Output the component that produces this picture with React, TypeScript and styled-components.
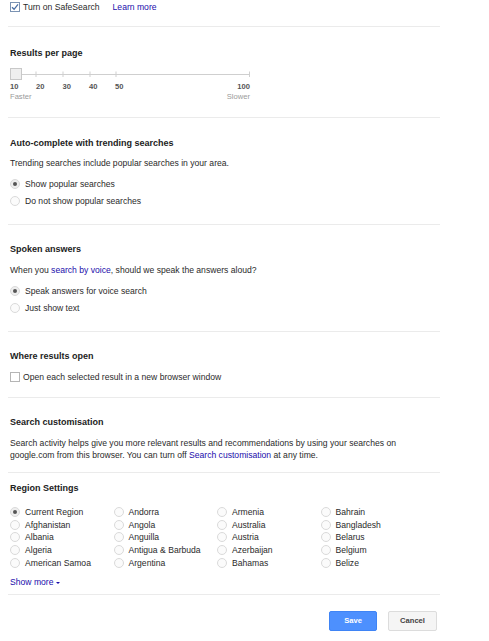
import React from "react";
import styled, { createGlobalStyle } from "styled-components";

const GlobalStyle = createGlobalStyle`
  html, body {
    margin: 0;
    padding: 0;
    background: #fff;
  }
  body {
    font-family: "Liberation Sans", Arial, sans-serif;
    font-size: 8.6px;
    color: #2a2a2a;
  }
`;

const Page = styled.div`
  width: 432px;
  margin-left: 8px;
`;

const Section = styled.div<{ $pt: number; $pb: number; $last?: boolean }>`
  padding: ${(p) => p.$pt}px 0 ${(p) => p.$pb}px 2px;
  border-bottom: ${(p) => (p.$last ? "none" : "1px solid #ebebeb")};
`;

const Heading = styled.div<{ $mb: number }>`
  font-size: 9px;
  font-weight: bold;
  line-height: 12px;
  color: #222;
  margin-bottom: ${(p) => p.$mb}px;
`;

const Text = styled.div<{ $mb?: number }>`
  line-height: 12px;
  margin-bottom: ${(p) => p.$mb ?? 0}px;
`;

const Link = styled.a`
  color: #1a0dab;
  text-decoration: none;
  cursor: pointer;
`;

const Row = styled.label<{ $gap?: number }>`
  display: flex;
  align-items: center;
  height: 12px;
  line-height: 12px;
  white-space: nowrap;
  & + & {
    margin-top: ${(p) => p.$gap ?? 5}px;
  }
`;

const Box = styled.span<{ $checked?: boolean }>`
  box-sizing: border-box;
  width: 10px;
  height: 10px;
  margin: 0 3px 0 0;
  border: 1px solid ${(p) => (p.$checked ? "#7b93b3" : "#b5b5b5")};
  background: #fff;
  display: inline-flex;
  align-items: center;
  justify-content: center;
  flex-shrink: 0;
`;

const Radio = styled.span<{ $checked?: boolean }>`
  box-sizing: border-box;
  width: 10px;
  height: 10px;
  border-radius: 50%;
  border: 1px solid #dadada;
  background: ${(p) => (p.$checked ? "#eee" : "#fbfbfb")};
  margin-right: 5px;
  display: inline-flex;
  align-items: center;
  justify-content: center;
  flex-shrink: 0;
  &::after {
    content: "";
    display: ${(p) => (p.$checked ? "block" : "none")};
    width: 4px;
    height: 4px;
    border-radius: 50%;
    background: #555;
  }
`;

const TopRow = styled.div`
  display: flex;
  align-items: center;
  height: 12px;
  line-height: 12px;
  gap: 13px;
`;

const Check = () => (
  <svg width="8" height="8" viewBox="0 0 8 8">
    <path d="M1 4.2 L3.1 6.3 L7 1.4" fill="none" stroke="#4a6fa5" strokeWidth="1.3" />
  </svg>
);

/* slider */
const SliderRow = styled.div`
  display: flex;
  align-items: center;
  height: 12px;
  margin-top: 9px;
`;

const Handle = styled.span`
  box-sizing: border-box;
  width: 12px;
  height: 12px;
  border: 1px solid #c8c8c8;
  background: #efefef;
  flex-shrink: 0;
`;

const Scale = styled.div`
  display: flex;
  width: 240px;
  margin-top: 2px;
  height: 10px;
  line-height: 10px;
  font-size: 7.6px;
  font-weight: bold;
  color: #555;
`;

const ScaleLabel = styled.span<{ $w?: number }>`
  width: ${(p) => (p.$w ? `${p.$w}px` : "auto")};
  flex: ${(p) => (p.$w ? "none" : "1")};
  text-align: ${(p) => (p.$w ? "left" : "right")};
`;

const SpeedRow = styled.div`
  display: flex;
  justify-content: space-between;
  width: 240px;
  height: 10px;
  line-height: 10px;
  font-size: 7.6px;
  color: #9a9a9a;
`;

/* region grid */
const RegionGrid = styled.div`
  display: grid;
  grid-template-columns: repeat(4, 103.5px);
  grid-template-rows: repeat(5, 12.75px);
  grid-auto-flow: column;
  margin-top: 11.5px;
`;

const RegionItem = styled.label`
  display: flex;
  align-items: center;
  white-space: nowrap;
  line-height: 12px;
`;

const ShowMore = styled(Link)`
  display: inline-flex;
  align-items: center;
  gap: 3px;
  margin-top: 6.5px;
  line-height: 12px;
  &::after {
    content: "";
    border-left: 2px solid transparent;
    border-right: 2px solid transparent;
    border-top: 2px solid #1a0dab;
    margin-top: 2px;
  }
`;

/* footer */
const Footer = styled.div`
  display: flex;
  justify-content: flex-end;
  gap: 11px;
  padding: 16px 3px 0 0;
`;

const Button = styled.button<{ $primary?: boolean }>`
  box-sizing: border-box;
  width: ${(p) => (p.$primary ? 48 : 49)}px;
  height: 20px;
  padding: 0;
  border-radius: 2px;
  font-family: "Liberation Sans", Arial, sans-serif;
  font-size: 7.6px;
  font-weight: bold;
  color: ${(p) => (p.$primary ? "#fff" : "#444")};
  background: ${(p) => (p.$primary ? "#4d90fe" : "#f5f5f5")};
  border: 1px solid ${(p) => (p.$primary ? "#3f84f5" : "#dcdcdc")};
`;

const regions = [
  "Current Region", "Afghanistan", "Albania", "Algeria", "American Samoa",
  "Andorra", "Angola", "Anguilla", "Antigua & Barbuda", "Argentina",
  "Armenia", "Australia", "Austria", "Azerbaijan", "Bahamas",
  "Bahrain", "Bangladesh", "Belarus", "Belgium", "Belize",
];

const ticks = [14, 41, 68, 94, 227.5];

export default function App() {
  return (
    <Page>
      <GlobalStyle />
      <Section $pt={1} $pb={13}>
        <TopRow>
          <Row>
            <Box $checked>
              <Check />
            </Box>
            Turn on SafeSearch
          </Row>
          <Link>Learn more</Link>
        </TopRow>
      </Section>

      <Section $pt={20} $pb={15}>
        <Heading $mb={0}>Results per page</Heading>
        <SliderRow>
          <Handle />
          <svg width="228" height="12" viewBox="0 0 228 12">
            <line x1="0" y1="6.5" x2="228" y2="6.5" stroke="#cfcfcf" strokeWidth="1" />
            {ticks.map((x) => (
              <line key={x} x1={x} y1="3.5" x2={x} y2="9" stroke="#cfcfcf" strokeWidth="1" />
            ))}
          </svg>
        </SliderRow>
        <Scale>
          <ScaleLabel $w={26}>10</ScaleLabel>
          <ScaleLabel $w={26.5}>20</ScaleLabel>
          <ScaleLabel $w={26.5}>30</ScaleLabel>
          <ScaleLabel $w={26}>40</ScaleLabel>
          <ScaleLabel $w={20}>50</ScaleLabel>
          <ScaleLabel>100</ScaleLabel>
        </Scale>
        <SpeedRow>
          <span>Faster</span>
          <span>Slower</span>
        </SpeedRow>
      </Section>

      <Section $pt={19} $pb={17}>
        <Heading $mb={8}>Auto-complete with trending searches</Heading>
        <Text $mb={9}>Trending searches include popular searches in your area.</Text>
        <Row>
          <Radio $checked />
          Show popular searches
        </Row>
        <Row>
          <Radio />
          Do not show popular searches
        </Row>
      </Section>

      <Section $pt={18} $pb={17}>
        <Heading $mb={9}>Spoken answers</Heading>
        <Text $mb={9}>
          When you <Link>search by voice</Link>, should we speak the answers aloud?
        </Text>
        <Row>
          <Radio $checked />
          Speak answers for voice search
        </Row>
        <Row>
          <Radio />
          Just show text
        </Row>
      </Section>

      <Section $pt={18} $pb={14}>
        <Heading $mb={9}>Where results open</Heading>
        <Row>
          <Box />
          Open each selected result in a new browser window
        </Row>
      </Section>

      <Section $pt={18} $pb={11}>
        <Heading $mb={9}>Search customisation</Heading>
        <Text>
          Search activity helps give you more relevant results and recommendations by using your searches on
          <br />
          google.com from this browser. You can turn off <Link>Search customisation</Link> at any time.
        </Text>
      </Section>

      <Section $pt={9} $pb={6}>
        <Heading $mb={0}>Region Settings</Heading>
        <RegionGrid>
          {regions.map((r, i) => (
            <RegionItem key={r}>
              <Radio $checked={i === 0} />
              {r}
            </RegionItem>
          ))}
        </RegionGrid>
        <ShowMore>Show more</ShowMore>
      </Section>

      <Footer>
        <Button $primary>Save</Button>
        <Button>Cancel</Button>
      </Footer>
    </Page>
  );
}
